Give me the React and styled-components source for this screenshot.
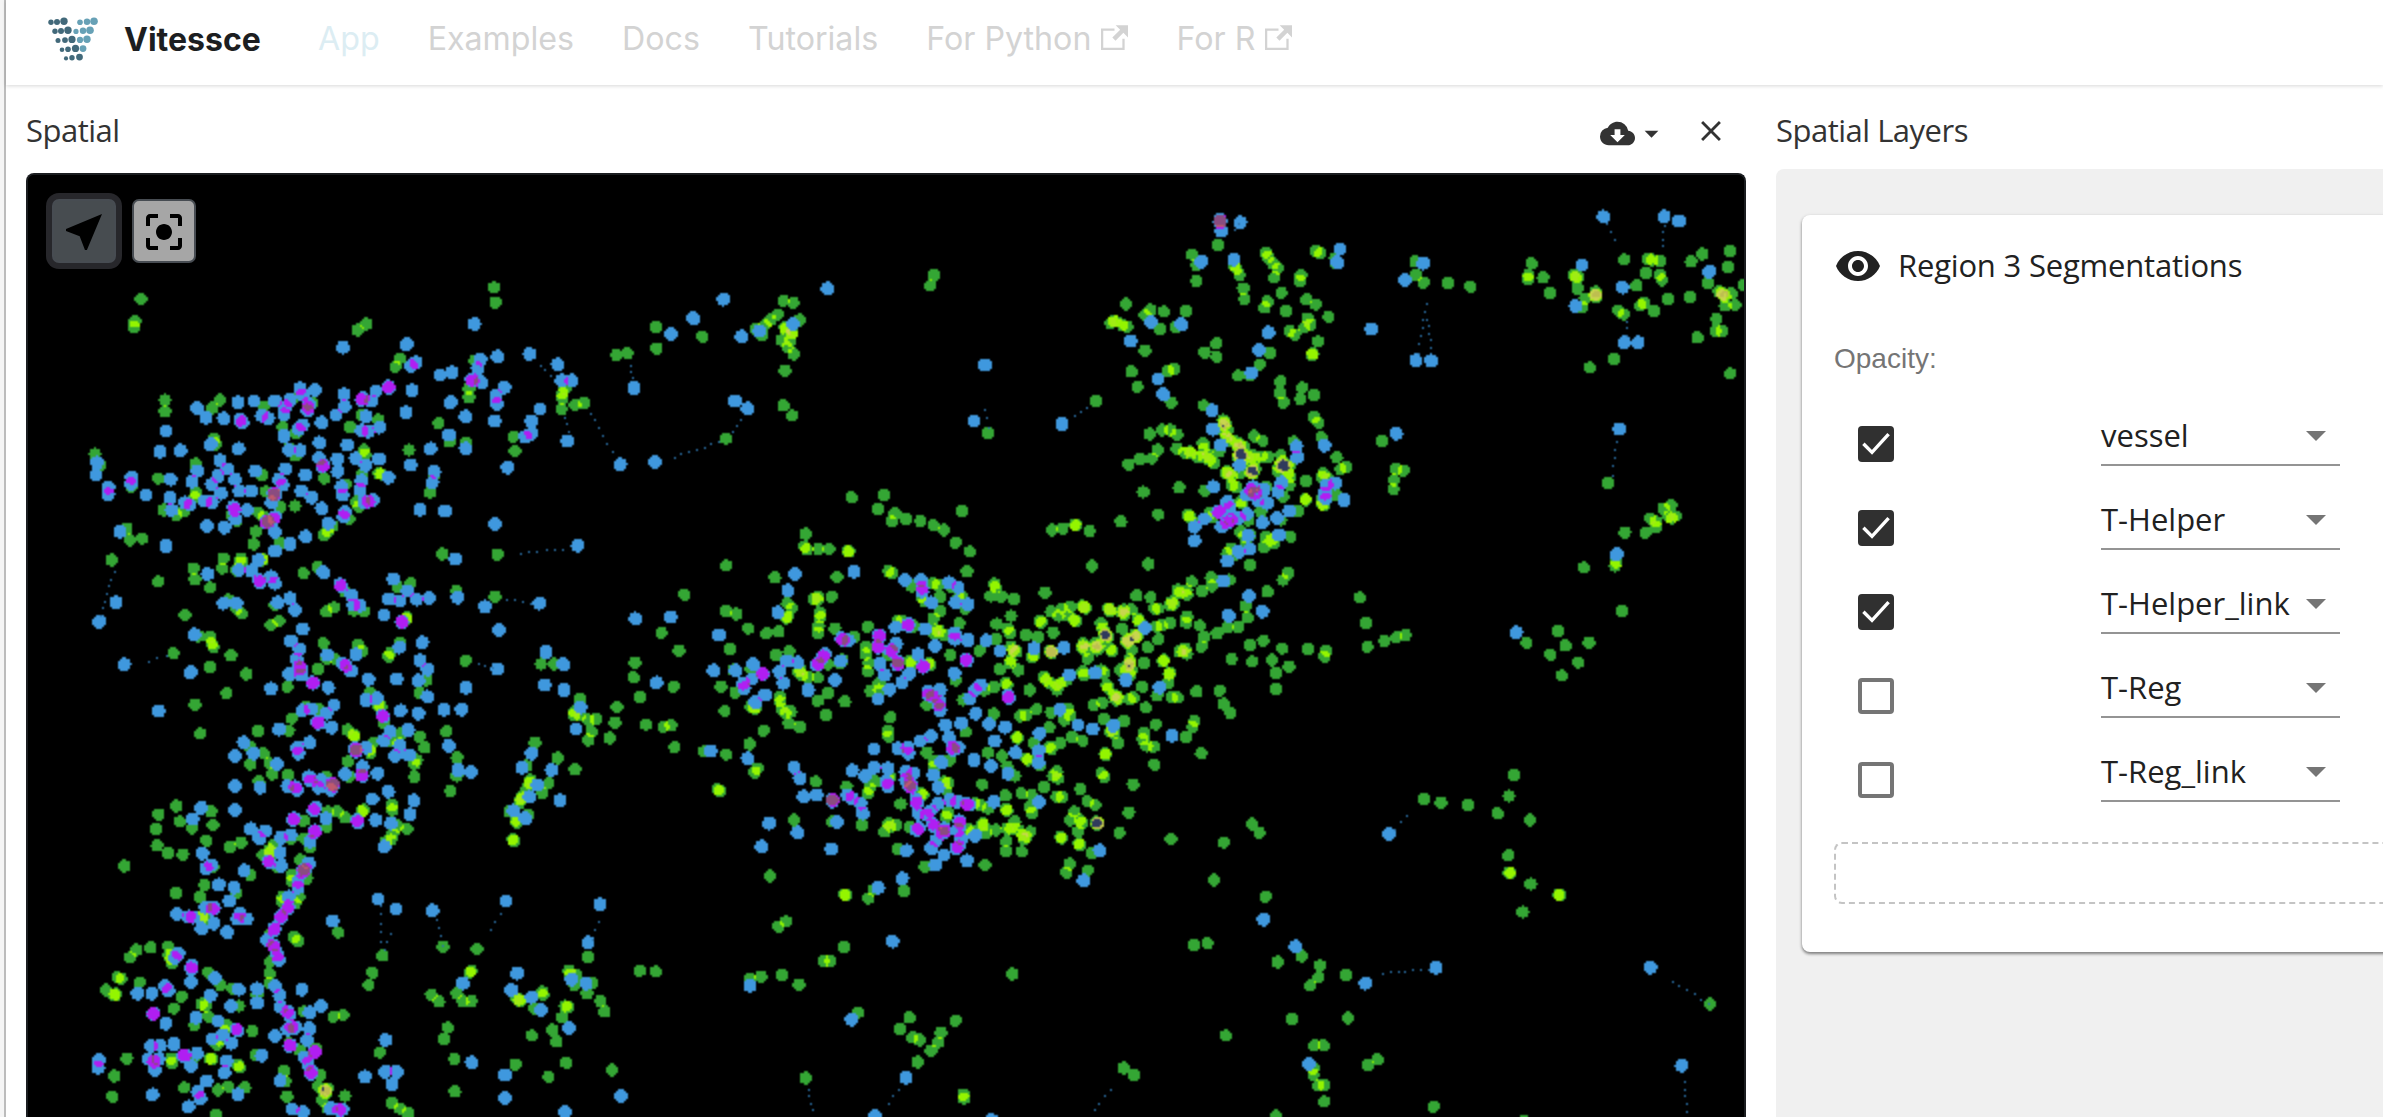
import React, { useLayoutEffect, useRef } from 'react';
import styled, { createGlobalStyle } from 'styled-components';
import {
  MdNearMe,
  MdCenterFocusStrong,
  MdCloudDownload,
  MdArrowDropDown,
  MdClose,
  MdVisibility,
} from 'react-icons/md';

/* ---------- cell data: each field of view has an origin, a scale and its cells ---------- */

const FIELDS = [
  {
    x: 60, y: 320, kx: 3, ky: 3,
    vessel: '222 22 225 5 893 30 920 12 1020 115 1006 140 315 240 315 274 480 240 457 264 610 260 668 322 707 340 700 235 757 250 742 272 904 285 955 300 870 320 462 355 466 372 912 390 915 403 688 385 706 407 1047 390 1136 310 1168 365 1217 367 1245 122 1227 205 1227 233 105 402 122 436 214 500 295 475 407 432 605 465 793 475 857 493 905 465 957 460 963 462 407 518 403 532 705 558 662 560 617 515 310 570 350 585 373 573 515 585 530 602 595 578 610 590 890 545 897 560 867 597 803 635 793 645 818 618 588 635 580 672 660 670 200 625 210 660 247 655 645 695 155 720 295 785 490 715 487 745 400 745 405 778 451 803 543 715 543 728 530 750 605 717 607 720 730 760 772 740 505 840 530 865 545 880 375 885 633 915 657 903 645 855 800 875 822 863 855 815 880 870 912 875 1148 702 1110 517 1120 470 1012 800 1052 790 1040 893 1040 897 1190 812 1305 830 1312 703 415 948 450 952 455 970 460 982 340 1000 513 1007 450 1042 560 1062 500 1120 405 1153 790 970 800 1015 825 1017 893 975 905 993 773 1047 682 1100 985 1010 992 998 1020 970 1217 1022 1100 1080 1078 1118 930 1120 955 1155 963 1160 740 1160 775 1165 695 1195 575 515 243 -63',
    helper: '849 82 1040 73 1243 12 1068 128 1052 138 1140 165 1176 158 1262 118 1253 145 1235 178 1264 187 1237 183 1313 110 1333 202 1308 228 1312 252 1303 303 1217 290 1172 247 1056 212 1038 278 985 200 988 204 948 213 908 235 905 240 935 243 852 223 853 260 828 285 785 308 765 210 720 206 727 225 745 250 745 262 742 272 690 240 677 260 672 283 645 243 605 287 625 295 582 243 534 248 540 298 547 308 491 295 438 293 411 265 318 333 300 395 361 392 452 373 536 386 727 315 716 328 672 348 778 368 863 375 918 290 958 322 905 332 925 335 687 390 720 392 887 415 957 417 917 437 1112 386 1167 345 1217 385 111 428 108 465 145 502 145 523 215 472 214 492 258 525 332 478 413 453 396 485 330 533 335 570 480 422 502 447 474 468 455 493 525 478 538 513 483 520 435 543 457 547 375 548 390 555 586 453 677 447 737 465 778 415 788 440 790 436 833 417 833 455 845 500 847 525 905 482 900 508 985 472 912 548 925 545 940 540 657 478 668 495 640 520 645 525 642 523 575 513 635 548 520 560 523 570 527 597 562 570 725 513 755 533 785 565 645 590 642 597 620 608 618 605 645 637 625 605 855 575 850 590 805 610 737 650 690 672 645 693 441 617 493 622 180 635 318 678 168 847 118 905 443 762 595 720 537 750 573 752 596 780 600 788 633 770 645 790 790 757 840 793 845 800 875 825 880 855 900 857 690 835 705 870 653 848 490 850 530 850 1052 435 1123 455 1117 487 1080 568 1155 573 1305 612 1343 442 1187 717 1000 777 1042 813 987 837 1020 843 1070 838 1107 833 1193 832 1275 860 972 885 1027 905 1025 907 1317 930 1087 967 1018 982 727 927 693 963 718 988 710 1017 718 1040 722 1045 725 1065 688 1063 403 944 193 1033 392 1057 295 1173 633 1106 757 1088 760 1090 805 1103 803 1005 848 1030 858 1037 873 1053 888 1003 1080 1022 1103 1048 1075 1082 1102 1130 1313 1047 1218 1102 925 1078 918 1140 950 1135 1010 1077 967 1187 970 1190 1022 1172 1075 1180 1152 1168 1205 1168 727 1172 753 1167 800 1180 822 1155',
  },
  {
    x: 60, y: 700, kx: 2.6133, ky: 3,
    vessel: '517 93 605 66 598 92 366 101 495 140 497 193 532 160 548 190 555 222 595 225 752 90 768 105 770 110 752 185 755 230 697 230 700 250 520 245 820 127 808 150 812 160 845 70 893 100 865 125 885 130 940 110 953 143 933 180 926 192 927 231 1010 94 1038 173 1037 228 1021 273 305 318 258 343 250 387 254 437 282 460 321 463 313 365 345 384 395 335 400 375 383 422 473 427 444 440 168 498 700 335 725 335 745 353 697 380 637 362 793 330 788 335 868 315 869 330 907 387 882 378 870 400 865 420 852 425 605 415 638 415 653 443 560 435 548 450 550 455 530 465 550 480 567 500 400 500 498 525 628 480 605 525 605 545 645 535 378 555 366 590 303 578 462 580 583 590 580 605 615 610 625 590 372 650 375 660 375 645 550 700 612 712 622 722 727 697 283 740 237 743 200 750 183 773 285 765 290 775 292 790 150 832 160 836 120 870 145 882 143 887 208 848 318 890 297 925 388 817 420 855 450 865 515 885 550 785 548 820 547 850 370 912 380 918 388 950 352 975 355 950 468 918 435 975 430 995 415 1020 410 1035 503 993 637 935 740 945 715 950 600 1030 625 1050 668 1047 175 1075 142 1128 137 1190 290 1075 293 1090 350 1070 392 1075 396 1077 512 1065 465 1095 470 1103 325 1163 413 1170 440 1160 483 1163 407 1243 585 1112 588 1145 593 1190 680 1125 675 1160 690 1172 700 1165 695 1180 697 1172 694 1170 685 1200 745 1188 700 1225 868 1210 888 1225 910 1240 843 767 817 818 807 855 1001 740 1090 747 1075 812 1070 818 970 884 990 905 1037 880 1053 905 1075 903 1013 983 1003 1017 836 1057 1031 1077 1032 1175 1190 1093 1233 1007 1277 1130 1323 1088 1298 1025 1287 990 1312 953 1320 918 1328 920 1413 903 1423 935 1377 880 1390 850 1330 812 1332 825 1350 825 1345 855 1380 772 1260 875 1262 885 1240 925 1193 895 1202 903 1200 900 1515 812 1557 815 1442 1110',
    helper: '573 88 673 66 675 70 710 82 480 127 506 160 457 167 457 258 523 262 652 128 620 143 623 160 567 192 843 50 845 55 862 95 910 90 845 122 888 137 875 168 912 165 772 145 773 155 774 150 800 143 790 200 788 225 790 228 745 222 830 221 650 230 655 243 683 240 675 262 595 258 615 260 620 270 712 250 715 257 708 270 714 253 1016 137 1040 210 1073 216 858 275 925 302 816 297 915 343 865 370 825 360 777 360 778 367 667 323 663 332 695 355 612 355 610 360 667 392 665 397 603 405 653 425 577 413 537 393 498 386 521 415 457 330 369 323 346 357 372 460 395 495 382 505 481 512 575 458 543 483 548 487 578 497 848 440 650 490 640 507 633 517 637 512 622 545 622 563 598 590 597 620 595 627 578 648 577 655 560 685 560 692 542 720 558 735 560 742 572 780 568 765 415 554 455 562 443 603 403 622 398 628 380 622 305 642 337 650 347 652 370 685 402 670 437 697 470 640 463 657 488 657 310 760 300 773 345 798 343 806 342 846 405 835 275 858 283 872 203 880 240 880 393 887 467 868 515 866 515 908 447 917 245 940 244 942 277 970 355 953 413 963 562 857 574 887 632 868 577 922 595 935 600 945 682 917 652 938 605 980 595 988 615 983 562 1008 652 985 645 1020 600 1038 602 1035 667 1056 665 1056 640 1072 648 1090 657 1115 655 1122 460 987 465 992 425 1005 397 1017 448 1030 238 1037 262 1037 298 1032 230 1077 245 1085 258 1077 248 1110 325 1065 322 1067 358 1060 342 1098 102 1080 100 1103 435 1083 430 1117 527 1067 575 1142 242 1184 383 1143 360 1175 367 1195 465 1183 336 1220 607 1227 635 1237 707 1225 730 1230 738 1228 797 1130 851 1020 850 1115 880 1115 868 1153 712 663 831 597 878 627 973 632 1165 603 1411 613 1380 728 1195 820 1180 870 1053 850 1232 892 1258 930 1337 838 1375 850 1330 985 1076 1088 1163 1125 1163 1195 1320 1235 1465 1188',
  },
  {
    x: 480, y: 640, kx: 3, ky: 3,
    vessel: '183 72 224 72 300 177 283 215 282 225 300 225 325 240 348 238 335 275 326 300 405 248 411 201 389 294 461 112 465 67 480 171 498 253 550 260 573 256 584 322 581 140 597 32 165 308 140 378 233 354 285 388 152 420 150 428 205 430 188 460 140 447 125 470 122 478 118 490 88 515 108 540 110 548 145 525 98 598 102 603',
    helper: '194 135 252 150 250 73 198 36 302 202 288 267 155 340 126 382 215 390 173 435 148 470 100 512 136 535 240 481 530 128',
  },
  {
    x: 420, y: 260, kx: 3, ky: 3,
    vessel: '222 83 226 127 280 530 285 573 435 385 427 400 427 415 424 447 465 435 492 428 590 285 622 280 708 201 710 265 847 230 1090 122 1120 128 1073 163 1052 180 1035 195 1008 207 1025 225 1138 180 1095 203 1098 208 1118 215 1115 220 1085 240 1112 240 1102 262 1120 282 1095 332 1090 437 1117 467 918 535 1542 45 1531 77 1392 705 1295 712 724 1118 777 1170 1704 520',
    helper: '162 192 329 282 413 313 425 362 455 362 360 447 335 483 335 520 315 530 443 543 642 384 601 613 705 606 753 222 820 175 910 118 965 230 1018 213 1118 192 1223 86 945 423 983 446 473 857 358 1030 646 1076 751 1071 225 793 237 1111 1695 315 1662 483 1926 492',
  },
  {
    x: 680, y: 500, kx: 2.6133, ky: 3,
    vessel: '517 27 562 40 553 65 590 57 629 63 663 76 690 90 720 127 757 155 736 33 328 102 325 140 332 148 362 147 389 147 438 155 442 155 121 197 12 284 248 233 410 231 750 215 545 213 555 220 120 332 147 342 178 385 226 400 258 395 131 447 280 310 292 325 278 355 280 350 360 290 350 298 360 300 396 290 366 340 367 352 363 378 361 400 405 385 455 412 490 380 605 258 632 268 632 290 640 305 662 250 675 255 680 290 712 262 735 285 728 292 745 325 680 332 662 355 730 370 568 365 580 362 612 378 670 390 678 393 665 400 690 405 822 252 825 262 812 288 840 290 874 297 954 278 1052 318 1060 325 1056 321 1020 320 998 325 970 335 990 348 1012 345 940 362 945 367 1030 360 1035 363 975 397 865 348 828 372 857 385 862 400 825 417 905 405 935 412 783 452 707 465 865 440 870 450 880 455 872 452 865 480 862 490 835 508 885 510 920 470 925 465 968 452 970 460 972 455 970 456 971 454 1120 325 1125 333 1122 329 1150 335 1160 330 1162 345 1158 338 1180 328 1195 355 1200 365 1193 287 1230 292 1240 325 1250 325 1280 315 1285 305 1290 312 1300 270 1305 280 1325 270 1337 245 1325 285 1365 273 1390 258 1388 233 1435 240 1325 350 1323 368 1280 368 1258 377 1245 380 1250 418 1358 377 1370 410 1363 440 1403 400 1430 383 1458 380 1483 353 1478 318 1535 275 1490 195 1524 422 1490 435 1441 477 1495 485 1547 480 1557 518 1558 567 1222 443 1213 490 1100 370 1105 385 1110 400 1115 405 1120 410 1112 412 1113 405 1110 407 1055 430 1050 440 1060 450 1053 438 1065 475 1085 430 1085 440 1095 435 1090 440 1125 445 1090 450 1130 455 1155 385 1165 420 1172 420 1170 425 1168 428 1188 405 1195 410 1190 412 1192 408 1180 450 1175 480 1178 490 1170 495 1176 488 1165 510 1150 510 1180 510 1175 525 1265 480 1262 484 1280 518 1278 522 1275 550 1320 445 1315 455 1305 455 1325 462 250 465 285 455 425 480 418 490 385 492 310 515 318 525 315 510 335 530 360 533 487 440 485 462 493 490 490 515 545 465 520 550 498 573 520 570 600 485 605 490 650 490 655 495 720 540 185 505 140 510 107 560 145 577 185 620 195 625 200 620 117 633 260 590 262 605 265 625 275 640 290 635 285 670 313 680 387 580 360 602 431 605 382 645 218 692 182 732 550 652 542 692 545 710 645 615 740 600 795 570 820 560 850 548 855 555 914 570 820 642 890 648 905 645 932 628 950 530 957 540 965 548 985 555 995 550 985 570 1010 540 1052 515 1055 525 1100 510 1110 520 1115 555 1120 565 1135 585 1142 590 1140 600 1145 595 1080 615 1105 608 1175 598 1185 592 1208 560 1217 623 1247 587 1285 592 1300 592 1350 575 1410 572 1421 612 1439 640 970 637 1015 625 1020 645 1005 660 965 682 1107 655 1160 663 1130 690 1135 700 1125 695 1145 730 1243 673 1213 698 1210 718 1220 738 1238 740 1345 662 1340 680 1322 712 1025 710 1052 722 995 728 925 730 965 740 970 748 880 712 883 714 1111 760 1112 765 1240 793 1362 760 746 695 805 757 842 768 645 757 665 785 665 800 705 780 905 775 910 780 940 795 985 815 975 828 988 835 875 828 855 800 1102 820 1110 832 1184 853 1047 867 951 860 893 880 918 885 985 890 998 892 790 853 690 845 700 848 695 870 355 845 436 860 495 865 490 880 510 845 550 832 545 840 630 880 635 885 577 912 770 910 785 915 805 925 850 887 852 927 855 932 915 920 920 940 1065 905 1085 915 1173 938 1148 998 1030 935 1020 960 1045 960 1050 970 1040 995 1042 1030 1045 1035 1088 965 1092 970 1090 975 1092 968 1090 971 1091 970 995 1010 998 1015 790 970 793 975 800 998 825 990 750 985 765 995 875 965 855 985 865 985 885 990 895 1005 905 1010 915 995 900 1018 853 1025 852 1055 893 1055 1018 1092 1010 1118 1065 1112 1077 1060 797 1095 640 1100 570 1047 475 975 545 970 550 980 535 995 565 975 600 980 700 940 695 950 398 965 298 960 62 755 121 763 202 805 195 817 98 868 105 874 235 1128 586 1172 492 1195 505 1170 430 1184 434 1186 1283 1017 1421 1027 1495 972 1514 998 1396 1140 1530 1190 450 -3 1250 43 1152 65 1070 93 972 90 1000 85 1032 73 1035 77 1077 198 1224 192 1328 45 1332 50 1385 40 1390 50 1350 72 1470 10 1465 5 1518 35 1485 60 1465 95 1475 110 1490 105 1530 110 1545 120 1553 130 1525 142 1440 145 1430 160 1450 165 1480 130',
    helper: '300 222 455 215 282 272 256 338 102 405 588 240 630 240 633 262 633 275 657 308 703 248 727 262 720 308 752 313 563 382 597 372 597 378 642 387 718 400 718 418 752 420 800 422 667 438 422 415 425 420 440 422 520 405 522 410 517 440 518 442 565 430 550 450 555 455 622 463 570 483 570 490 568 495 600 520 580 548 548 568 517 597 523 492 535 525 635 498 636 502 747 478 750 482 717 520 836 453 925 445 1003 443 1018 525 1085 518 1165 540 1215 385 1434 347 1487 287 1522 335 1420 243 1253 562 378 462 373 470 362 490 358 495 420 483 278 483 308 488 260 515 270 550 335 570 405 540 88 512 145 512 190 492 215 520 218 522 188 537 165 550 168 565 222 585 197 607 648 575 650 585 680 568 678 605 675 615 680 630 660 590 785 555 772 570 757 595 857 588 860 595 773 640 735 670 693 675 807 672 850 682 655 708 628 723 703 712 507 747 570 745 595 743 597 760 712 742 713 750 728 742 822 723 683 787 768 780 813 797 877 757 940 700 938 752 937 787 857 820 993 628 1040 675 1078 687 1133 677 1286 707 662 825 675 863 450 812 483 828 508 803 543 805 540 845 543 858 590 815 610 820 590 838 602 850 605 862 600 860 298 802 313 835 177 776 80 753 357 885 323 890 398 897 399 900 398 904 437 885 450 895 472 910 478 940 410 967 233 970 307 998 213 1040 396 1047 617 900 620 910 622 940 655 932 645 945 675 910 705 900 725 905 750 912 755 915 820 905 938 905 660 970 665 980 618 990 625 985 690 985 695 993 687 1000 730 962 732 970 727 990 735 1015 722 1045 728 1040 772 1007 657 1045 670 1020 690 1065 750 1082 667 1095 592 1052 581 1135 518 1163 1055 1142 1097 1052 1345 80 1345 122 1430 183 1460 155 1490 147 1485 107 1522 68 1370 57 1405 35 1410 38 1437 25 1440 60 1430 68 1415 80 1460 55 1482 42 1510 3 1535 10 1430 5 1560 55 1565 105',
  },
  {
    x: 1080, y: 200, kx: 2.3403, ky: 3,
    vessel: '322 135 262 163 273 195 273 243 435 157 440 172 452 190 463 205 455 233 552 152 563 160 597 175 600 190 517 225 515 242 360 195 367 207 373 225 382 265 385 297 471 278 439 305 432 323 482 332 530 298 552 313 582 350 532 355 540 373 525 382 490 393 503 403 108 312 165 330 152 345 196 335 248 333 78 362 72 370 85 365 100 375 110 380 187 387 225 380 319 430 320 470 292 457 152 452 120 515 205 513 220 507 134 560 557 425 545 460 543 465 445 460 421 493 370 527 398 527 469 545 468 580 476 607 520 563 516 597 547 585 213 607 290 617 37 602 548 650 558 668 163 702 193 690 212 690 227 703 335 660 337 667 340 672 335 675 330 690 345 690 310 685 340 715 350 720 345 712 407 708 427 722 365 725 370 745 375 735 385 740 372 742 372 765 380 760 370 770 385 775 375 772 378 768 374 766 395 770 405 765 410 775 425 770 440 772 182 750 140 777 168 775 114 793 227 745 245 757 257 755 260 760 288 730 290 745 300 765 290 770 275 770 315 790 325 755 303 780 340 820 350 822 345 815 355 830 375 820 400 800 402 812 405 820 400 818 404 815 401 820 410 805 355 855 365 860 435 860 500 725 470 765 475 785 480 795 475 800 478 797 472 798 470 790 485 795 490 800 465 800 487 820 492 830 463 815 490 855 475 890 565 712 601 772 622 800 610 808 528 843 570 820 565 830 580 835 527 897 529 900 565 900 567 912 570 915 600 885 232 862 148 876 292 872 707 722 740 808 757 812 735 840 733 868 380 900 385 915 370 905 785 185 786 225 804 248 861 250 914 260 1057 190 1050 225 1048 237 1084 233 1101 279 1155 225 1160 232 1165 230 1164 265 1182 295 1175 322 1207 275 1208 283 1209 292 1205 287 1208 284 1274 179 1303 257 1330 177 1340 180 1357 183 1325 218 1357 223 1362 240 1430 185 1457 162 1522 153 1516 202 1470 250 1375 297 1427 291 1320 308 1312 316 1343 332 1260 332 1273 343 1495 275 1505 285 1503 280 1510 290 1525 280 1504 283 1510 317 1533 315 1490 357 1487 393 1502 393 1445 413 1250 478 1193 503 1522 521 1555 255 1236 849 1383 915 1365 925 1335 955 1378 950 1385 955 1393 948 1348 965 1348 980 1323 998 1275 997 1255 1087 1252 1098 1179 1103 1268 1232 655 1193 487 1118 475 1140 493 1010 510 933 470 960',
    helper: '328 60 329 63 327 66 331 93 375 68 284 185 360 178 608 147 602 187 166 367 237 373 118 423 441 398 419 450 401 519 182 537 195 583 309 632 311 688 329 735 373 796 506 740 508 772 572 737 740 700 682 387 803 190 761 240 786 482 822 482 312 860 345 897 472 848 463 875 405 860 400 870 410 880 390 885 430 870 418 895 440 910 577 855 597 850 573 880 575 897 618 900 490 933 473 1005 1225 50 1367 50 1402 63 1175 195 1270 262 1473 215 1160 318 1274 427 1306 428 1262 687 1256 1063',
  },
  {
    x: 660, y: 860, kx: 3, ky: 3,
    vessel: '378 185 355 200 551 261 490 303 512 303 366 345 417 373 303 349 271 357 595 457 748 473 719 507 757 532 778 540 887 482 843 518 834 547 813 571 772 606 437 654 910 703 912 715 1058 342 1391 624 1422 645',
    helper: '698 244 270 376 575 478 738 652 645 768 995 780',
  },
  {
    x: 1180, y: 600, kx: 2.7509, ky: 3,
    vessel: '281 145 300 200 352 148 403 152 397 170 512 68 515 140 563 123 595 112 620 105 954 128 1040 93 1060 137 1019 164 1095 187 1050 227 1125 128 671 596 718 607 792 614 874 640 905 588 919 526 963 660 904 766 905 818 910 819 965 852 943 936 1042 884 1045 885 38 1036 75 1030 335 1068 268 1086 385 1097 381 1133 358 1157 456 1126 308 1256 462 1254 126 1307 370 1337 395 1337 367 1405 367 1425 380 1457 395 1455 397 1505 516 1395 543 1378 697 1520 264 1548 946 1562 1458 1212',
    helper: '925 98 575 703 230 958 318 1040 510 1150 704 1103 1294 1103 1380 1397 354 1392',
  },
];

/* cell-to-cell links, as x1 y1 x2 y2 */
const LINKS = [
  [539, 364, 550, 375], [589, 412, 611, 450], [563, 417, 567, 430], [629, 364, 632, 376],
  [673, 456, 718, 441], [740, 418, 732, 430], [520, 552, 562, 548], [505, 598, 530, 602],
  [113, 571, 100, 615], [147, 660, 166, 655], [477, 663, 492, 667], [379, 905, 379, 940],
  [389, 933, 384, 948], [435, 919, 442, 944], [499, 912, 490, 928], [597, 920, 592, 938],
  [1606, 223, 1614, 238], [1425, 303, 1417, 352], [1426, 318, 1430, 346], [1615, 440, 1611, 474],
  [1382, 972, 1427, 968], [1671, 980, 1708, 1003], [1683, 1081, 1686, 1110], [1394, 828, 1406, 815],
  [807, 1088, 813, 1117], [897, 1088, 888, 1102], [1109, 1088, 1088, 1116], [984, 408, 988, 426],
  [1233, 228, 1238, 222], [1625, 320, 1625, 334], [1663, 224, 1661, 245], [1074, 415, 1086, 407],
];

const PLOT = { x: 28, y: 175, width: 1716, height: 942, cell: 2 };
const RADIUS = { vessel: 3.12, helper: 3.42 };
const VESSEL_COLORS = [[52, 166, 52], [148, 245, 0], [160, 236, 20], [200, 214, 78], [190, 190, 80], [48, 58, 92]];
const HELPER_COLORS = [[63, 152, 222], [176, 30, 242], [138, 76, 128], [190, 90, 110]];

/* Fields of view overlap at their borders, so a cell seen by two of them is kept once. */
function collectCells(kind) {
  const cells = [];
  FIELDS.forEach((field, f) => {
    const v = field[kind].split(' ').map(Number);
    for (let k = 0; k < v.length; k += 2) {
      const x = field.x + v[k] / field.kx;
      const y = field.y + v[k + 1] / field.ky;
      const seen = cells.some((c) => c.f !== f && Math.hypot(c.x - x, c.y - y) < 4.5);
      if (!seen) cells.push({ x, y, f });
    }
  });
  return cells;
}

function paintCells(canvas) {
  const w = PLOT.width / PLOT.cell;
  const h = PLOT.height / PLOT.cell;
  const counts = { vessel: new Uint8Array(w * h), helper: new Uint8Array(w * h) };

  const stamp = (grid, cx, cy, r) => {
    for (let j = Math.floor(cy - r); j <= cy + r; j += 1) {
      for (let i = Math.floor(cx - r); i <= cx + r; i += 1) {
        const dx = i + 0.5 - cx;
        const dy = j + 0.5 - cy;
        if (i >= 0 && j >= 0 && i < w && j < h && dx * dx + dy * dy <= r * r) grid[j * w + i] += 1;
      }
    }
  };

  ['vessel', 'helper'].forEach((kind) => {
    collectCells(kind).forEach(({ x, y }) => {
      stamp(counts[kind], (x - PLOT.x) / PLOT.cell, (y - PLOT.y) / PLOT.cell, RADIUS[kind]);
    });
  });

  const ctx = canvas.getContext('2d');
  const image = ctx.createImageData(w, h);
  for (let p = 0; p < w * h; p += 1) {
    const b = counts.helper[p];
    const g = counts.vessel[p];
    let c = [0, 0, 0];
    if (b) c = HELPER_COLORS[Math.min(b, 4) - 1];
    else if (g) c = VESSEL_COLORS[Math.min(g, 6) - 1];
    image.data.set([c[0], c[1], c[2], 255], p * 4);
  }
  ctx.putImageData(image, 0, 0);

  ctx.fillStyle = '#2d74ac';
  LINKS.forEach(([x1, y1, x2, y2]) => {
    const n = Math.max(1, Math.round(Math.hypot(x2 - x1, y2 - y1) / 8));
    for (let k = 0; k <= n; k += 1) {
      const x = x1 + ((x2 - x1) * k) / n;
      const y = y1 + ((y2 - y1) * k) / n;
      ctx.fillRect(Math.round((x - PLOT.x) / 2), Math.round((y - PLOT.y) / 2), 1, 1);
    }
  });
}

/* ---------- styles ---------- */

const GlobalStyle = createGlobalStyle`
  * { box-sizing: border-box; }
  body { margin: 0; background: #fff; overflow: hidden; }
`;

const UI_FONT = '"Open Sans", "Noto Sans", sans-serif';

const Frame = styled.div`
  height: 100vh;
  padding-left: 4px;
  background: #f5f5f5;
  overflow: hidden;
`;

const Page = styled.div`
  display: flex;
  flex-direction: column;
  height: 100%;
  border-left: 2px solid #bcbcbc;
  background: #fff;
`;

const Navbar = styled.header`
  flex: none;
  display: flex;
  align-items: center;
  height: 85px;
  padding: 0 0 7px 42px;
  box-shadow: 0 1px 4px rgba(0, 0, 0, 0.16);
  font-family: Inter, sans-serif;
`;

const LogoSvg = styled.svg`
  flex: none;
`;

const Brand = styled.div`
  display: flex;
  align-items: center;
  gap: 25px;
  width: 270px;
  font-size: 32px;
  font-weight: 700;
  color: #1c1e21;
`;

const Nav = styled.nav`
  display: flex;
  align-items: center;
  gap: 48px;
`;

const NavLink = styled.a`
  display: flex;
  align-items: center;
  gap: 10px;
  font-size: 32.2px;
  line-height: 40px;
  white-space: nowrap;
  color: ${(p) => (p.$active ? '#dcedf3' : '#d3d3d3')};
`;

const ExternalSvg = styled.svg`
  margin-top: -4px;
  fill: currentColor;
`;

const Workspace = styled.main`
  flex: 1;
  display: flex;
  gap: 30px;
  min-height: 0;
  padding-left: 20px;
  font-family: ${UI_FONT};
`;

const Panel = styled.section`
  flex: none;
  display: flex;
  flex-direction: column;
  width: ${(p) => p.$width}px;
`;

const PanelHeader = styled.div`
  flex: none;
  display: flex;
  justify-content: space-between;
  height: ${(p) => p.$height}px;
  padding: 23px 18px 0 0;
  color: #333;
`;

const PanelTitle = styled.h2`
  margin: 0;
  font-size: 31px;
  font-weight: 400;
  line-height: 44px;
  letter-spacing: -0.5px;
  white-space: nowrap;
`;

const PanelActions = styled.div`
  display: flex;
  height: 46px;
  align-items: center;
`;

const DownloadButton = styled.span`
  display: flex;
  align-items: center;
  padding-top: 5px;
  margin-right: 26px;
`;

const Viewer = styled.div`
  position: relative;
  flex: 1;
  min-height: 0;
  border: 2px solid #1b1d20;
  border-bottom: 0;
  border-radius: 8px 8px 0 0;
  background: #000;
  overflow: hidden;
`;

const CellCanvas = styled.canvas`
  display: block;
  width: ${PLOT.width}px;
  height: ${PLOT.height}px;
`;

const ToolBar = styled.div`
  position: absolute;
  top: 24px;
  left: 24px;
  display: flex;
  gap: 16px;
`;

const ToolButton = styled.span`
  display: flex;
  align-items: center;
  justify-content: center;
  width: 64px;
  height: 64px;
  border: 2px solid #474c52;
  border-radius: 7px;
  background: ${(p) => (p.$active ? '#474c50' : '#a6a6a6')};
  box-shadow: ${(p) => (p.$active ? '0 0 0 6px #27272b' : 'none')};
  color: #000;

  svg {
    margin-top: 2px;
  }
`;

const LayersArea = styled.div`
  flex: 1;
  padding: 46px 0 0 26px;
  border-radius: 8px 0 0 0;
  background: #f0f0f0;
  overflow: hidden;
`;

const LayerCard = styled.div`
  height: 737px;
  margin-right: -20px;
  padding: 0 0 0 32px;
  border-radius: 8px;
  background: #fff;
  box-shadow: 0 2px 3px rgba(0, 0, 0, 0.42), 0 1px 4px rgba(0, 0, 0, 0.12);
`;

const LayerHeading = styled.div`
  display: flex;
  align-items: center;
  gap: 16px;
  height: 102px;
  font-size: 31px;
  letter-spacing: -0.2px;
  color: #212121;

  span {
    margin-top: -3px;
  }
`;

const FieldLabel = styled.div`
  height: 85px;
  padding-top: 10px;
  font-family: "Liberation Sans", Arial, sans-serif;
  font-size: 28px;
  line-height: 64px;
  color: #757575;
`;

const ChannelRow = styled.div`
  display: grid;
  grid-template-columns: 267px 239px;
  height: 84px;
  align-items: start;
`;

const CheckCell = styled.span`
  display: flex;
  padding: 18px 0 0 18px;
`;

const Select = styled.div`
  display: flex;
  justify-content: space-between;
  height: 64px;
  border-bottom: 2px solid #949494;
  font-size: 31px;
  line-height: 66px;
  white-space: nowrap;
  color: #212121;

  svg {
    flex: none;
    margin: 9px 0 0 -24px;
    color: #757575;
  }
`;

const AddChannel = styled.div`
  height: 62px;
  margin-top: 20px;
  border: 2px dashed #c4c4c4;
  border-radius: 8px;
`;

/* ---------- small drawings ---------- */

const LOGO_ROWS = [
  { y: 6, dark: [[3, 2.7], [9, 3], [16, 3.7]], light: [[32, 2.8], [39, 3.2], [46, 3.8]] },
  { y: 15, dark: [[7, 2.7], [13, 3], [20, 3.7]], light: [[28, 2.6], [35, 3.2], [42, 3.8]] },
  { y: 24, dark: [[10, 2.5], [17, 2.9], [24, 3.6]], light: [[32, 3.1], [39, 3.7]] },
  { y: 33, dark: [[14, 2.3], [20, 2.8], [27.5, 3.6]], light: [[35, 3.4]] },
  { y: 41.5, dark: [[18, 2.1], [24, 2.7], [31.5, 3.4]], light: [] },
];

function Logo() {
  return (
    <LogoSvg width="51" height="46" viewBox="0 0 51 46">
      {LOGO_ROWS.map((row) => (
        <g key={row.y}>
          {row.dark.map(([x, r]) => <circle key={x} cx={x} cy={row.y - (r - 3)} r={r} fill="#42697a" />)}
          {row.light.map(([x, r]) => <circle key={x} cx={x} cy={row.y - (r - 3)} r={r} fill="#67a1b6" />)}
        </g>
      ))}
    </LogoSvg>
  );
}

function ExternalIcon() {
  return (
    <ExternalSvg width="27" height="27" viewBox="0 0 24 24">
      <path d="M21 13v10h-21v-19h12v2h-10v15h17v-8h2zm3-12h-10.988l4.035 4-6.977 7.07 2.828 2.828 6.977-7.07 4.125 4.172v-11z" />
    </ExternalSvg>
  );
}

function Checkbox({ checked }) {
  return (
    <svg width="48" height="48" viewBox="0 0 24 24">
      {checked ? (
        <>
          <rect x="3" y="3" width="18" height="18" rx="2" fill="#303030" />
          <path d="M5.7 11.900l4.300 4.300 8.300-9.100" fill="none" stroke="#fff" strokeWidth="1.7" />
        </>
      ) : (
        <rect x="4" y="4" width="16" height="16" rx="1" fill="none" stroke="#757575" strokeWidth="2" />
      )}
    </svg>
  );
}

function CellPlot() {
  const ref = useRef(null);
  useLayoutEffect(() => {
    paintCells(ref.current);
  }, []);
  return <CellCanvas ref={ref} width={PLOT.width / PLOT.cell} height={PLOT.height / PLOT.cell} />;
}

const NAV_LINKS = [
  { label: 'App', active: true },
  { label: 'Examples' },
  { label: 'Docs' },
  { label: 'Tutorials' },
  { label: 'For Python', external: true },
  { label: 'For R', external: true },
];

const CHANNELS = [
  { name: 'vessel', checked: true },
  { name: 'T-Helper', checked: true },
  { name: 'T-Helper_link', checked: true },
  { name: 'T-Reg', checked: false },
  { name: 'T-Reg_link', checked: false },
];

export default function App() {
  return (
    <Frame>
      <GlobalStyle />
      <Page>
        <Navbar>
          <Brand>
            <Logo />
            <span>Vitessce</span>
          </Brand>
          <Nav>
            {NAV_LINKS.map((link) => (
              <NavLink key={link.label} $active={link.active}>
                {link.label}
                {link.external && <ExternalIcon />}
              </NavLink>
            ))}
          </Nav>
        </Navbar>
        <Workspace>
          <Panel $width={1720}>
            <PanelHeader $height={88}>
              <PanelTitle>Spatial</PanelTitle>
              <PanelActions>
                <DownloadButton>
                  <MdCloudDownload size={35} />
                  <MdArrowDropDown size={33} />
                </DownloadButton>
                <MdClose size={34} />
              </PanelActions>
            </PanelHeader>
            <Viewer>
              <CellPlot />
              <ToolBar>
                <ToolButton $active><MdNearMe size={48} /></ToolButton>
                <ToolButton><MdCenterFocusStrong size={48} /></ToolButton>
              </ToolBar>
            </Viewer>
          </Panel>
          <Panel $width={607}>
            <PanelHeader $height={84}>
              <PanelTitle>Spatial Layers</PanelTitle>
            </PanelHeader>
            <LayersArea>
              <LayerCard>
                <LayerHeading>
                  <MdVisibility size={48} />
                  <span>Region 3 Segmentations</span>
                </LayerHeading>
                <FieldLabel>Opacity:</FieldLabel>
                {CHANNELS.map((channel) => (
                  <ChannelRow key={channel.name}>
                    <CheckCell><Checkbox checked={channel.checked} /></CheckCell>
                    <Select>
                      <span>{channel.name}</span>
                      <MdArrowDropDown size={48} />
                    </Select>
                  </ChannelRow>
                ))}
                <AddChannel />
              </LayerCard>
            </LayersArea>
          </Panel>
        </Workspace>
      </Page>
    </Frame>
  );
}
